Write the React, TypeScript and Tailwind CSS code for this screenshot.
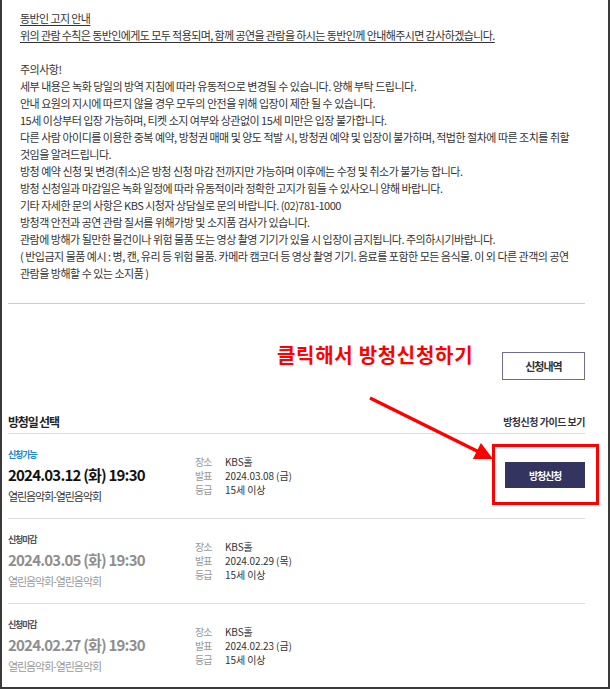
type Show = {
  open: boolean;
  date: string;
  notice: string;
};

const shows: Show[] = [
  { open: true, date: "2024.03.12 (화) 19:30", notice: "2024.03.08 (금)" },
  { open: false, date: "2024.03.05 (화) 19:30", notice: "2024.02.29 (목)" },
  { open: false, date: "2024.02.27 (화) 19:30", notice: "2024.02.23 (금)" },
];

const notes = [
  "세부 내용은 녹화 당일의 방역 지침에 따라 유동적으로 변경될 수 있습니다. 양해 부탁 드립니다.",
  "안내 요원의 지시에 따르지 않을 경우 모두의 안전을 위해 입장이 제한 될 수 있습니다.",
  "15세 이상부터 입장 가능하며, 티켓 소지 여부와 상관없이 15세 미만은 입장 불가합니다.",
  "다른 사람 아이디를 이용한 중복 예약, 방청권 매매 및 양도 적발 시, 방청권 예약 및 입장이 불가하며, 적법한 절차에 따른 조치를 취할",
  "것임을 알려드립니다.",
  "방청 예약 신청 및 변경(취소)은 방청 신청 마감 전까지만 가능하며 이후에는 수정 및 취소가 불가능 합니다.",
  "방청 신청일과 마감일은 녹화 일정에 따라 유동적이라 정확한 고지가 힘들 수 있사오니 양해 바랍니다.",
  "기타 자세한 문의 사항은 KBS 시청자 상담실로 문의 바랍니다. (02)781-1000",
  "방청객 안전과 공연 관람 질서를 위해가방 및 소지품 검사가 있습니다.",
  "관람에 방해가 될만한 물건이나 위험 물품 또는 영상 촬영 기기가 있을 시 입장이 금지됩니다. 주의하시기바랍니다.",
  "( 반입금지 물품 예시 : 병, 캔, 유리 등 위험 물품. 카메라 캠코더 등 영상 촬영 기기. 음료를 포함한 모든 음식물. 이 외 다른 관객의 공연",
  "관람을 방해할 수 있는 소지품 )",
];

function ShowRow({ show, last }: { show: Show; last: boolean }) {
  const { open, date, notice } = show;
  return (
    <div
      className={`flex h-[85px] ${last ? "" : "border-b border-[#dddddd]"}`}
    >
      {/* date + title */}
      <div className="w-[187px] pt-[15px]">
        <div
          className={`text-[9px] font-bold leading-[12px] tracking-[-1.2px] ${
            open ? "text-[#1b87d3]" : "text-[#555555]"
          }`}
        >
          {open ? "신청가능" : "신청마감"}
        </div>
        <div
          className={`mt-[4px] whitespace-nowrap text-[15px] font-bold leading-[20px] tracking-[-0.8px] ${
            open ? "text-[#111111]" : "text-[#8e8e8e]"
          }`}
        >
          {date}
        </div>
        <div
          className={`mt-[3px] text-[11px] leading-[16px] tracking-[-1.1px] ${
            open ? "text-[#333333]" : "text-[#999999]"
          }`}
        >
          열린음악회-열린음악회
        </div>
      </div>
      {/* place / notice / grade */}
      <div className="grid grid-cols-[30px_auto] content-start pt-[21px] text-[10px] leading-[14px] tracking-[-0.1px]">
        <span className="tracking-[-1px] text-[#999999]">장소</span>
        <span className="text-[#333333]">KBS홀</span>
        <span className="tracking-[-1px] text-[#999999]">발표</span>
        <span className="text-[#333333]">{notice}</span>
        <span className="tracking-[-1px] text-[#999999]">등급</span>
        <span className="text-[#333333]">15세 이상</span>
      </div>
      {open && (
        <button className="ml-auto mt-[28px] h-[26px] w-[80px] bg-[#343461] text-[10px] font-bold tracking-[-1.2px] text-white">
          방청신청
        </button>
      )}
    </div>
  );
}

export default function App() {
  return (
    <div className="relative h-[689px] w-[610px] overflow-hidden border-x-2 border-b-2 border-[#3a3a3a] bg-white font-['Noto_Sans_CJK_KR',sans-serif]">
      <div className="pl-[6px] pr-[23px]">
        {/* notice text */}
        <div className="border-b border-[#cccccc] pb-[21px] pl-[12px] pt-[10px] text-[11px] leading-[17px] tracking-[-0.5px] text-[#333333]">
          <p className="tracking-[-0.6px] underline underline-offset-2">
            동반인 고지 안내
          </p>
          <p className="whitespace-nowrap tracking-[-0.6px] underline underline-offset-2">
            위의 관람 수칙은 동반인에게도 모두 적용되며, 함께 공연을 관람을
            하시는 동반인께 안내해주시면 감사하겠습니다.
          </p>
          <p className="h-[17px]" />
          <p>주의사항!</p>
          {notes.map((line) => (
            <p key={line} className="whitespace-nowrap">
              {line}
            </p>
          ))}
        </div>

        <div className="mt-[48px] flex justify-end">
          <button className="h-[28px] w-[83px] border border-[#6e6e90] text-[11px] font-bold tracking-[-1px] text-[#333333]">
            신청내역
          </button>
        </div>

        <div className="mt-[30px] flex h-[24px] items-center justify-between border-b border-[#dddddd]">
          <h2 className="text-[12px] font-bold tracking-[-1.2px] text-[#222222]">
            방청일 선택
          </h2>
          <span className="text-[10px] font-bold tracking-[-0.5px] text-[#333344]">
            방청신청 가이드 보기
          </span>
        </div>

        {shows.map((show, i) => (
          <ShowRow key={show.date} show={show} last={i === shows.length - 1} />
        ))}
      </div>

      {/* annotation overlay */}
      <div className="absolute left-[275px] top-[343px] text-[20px] font-bold leading-[24px] tracking-[0.7px] text-[#ff0000]">
        클릭해서 방청신청하기
      </div>
      <div className="absolute left-[490px] top-[444px] h-[61px] w-[107px] border-[3px] border-[#ff0000]" />
      <svg
        className="pointer-events-none absolute left-0 top-0"
        width="610"
        height="689"
      >
        <line
          x1="368"
          y1="398"
          x2="477"
          y2="452"
          stroke="#ff0000"
          strokeWidth="3.5"
        />
        <polygon points="491,459 470.9,459.1 478.9,442.9" fill="#ff0000" />
      </svg>
    </div>
  );
}
